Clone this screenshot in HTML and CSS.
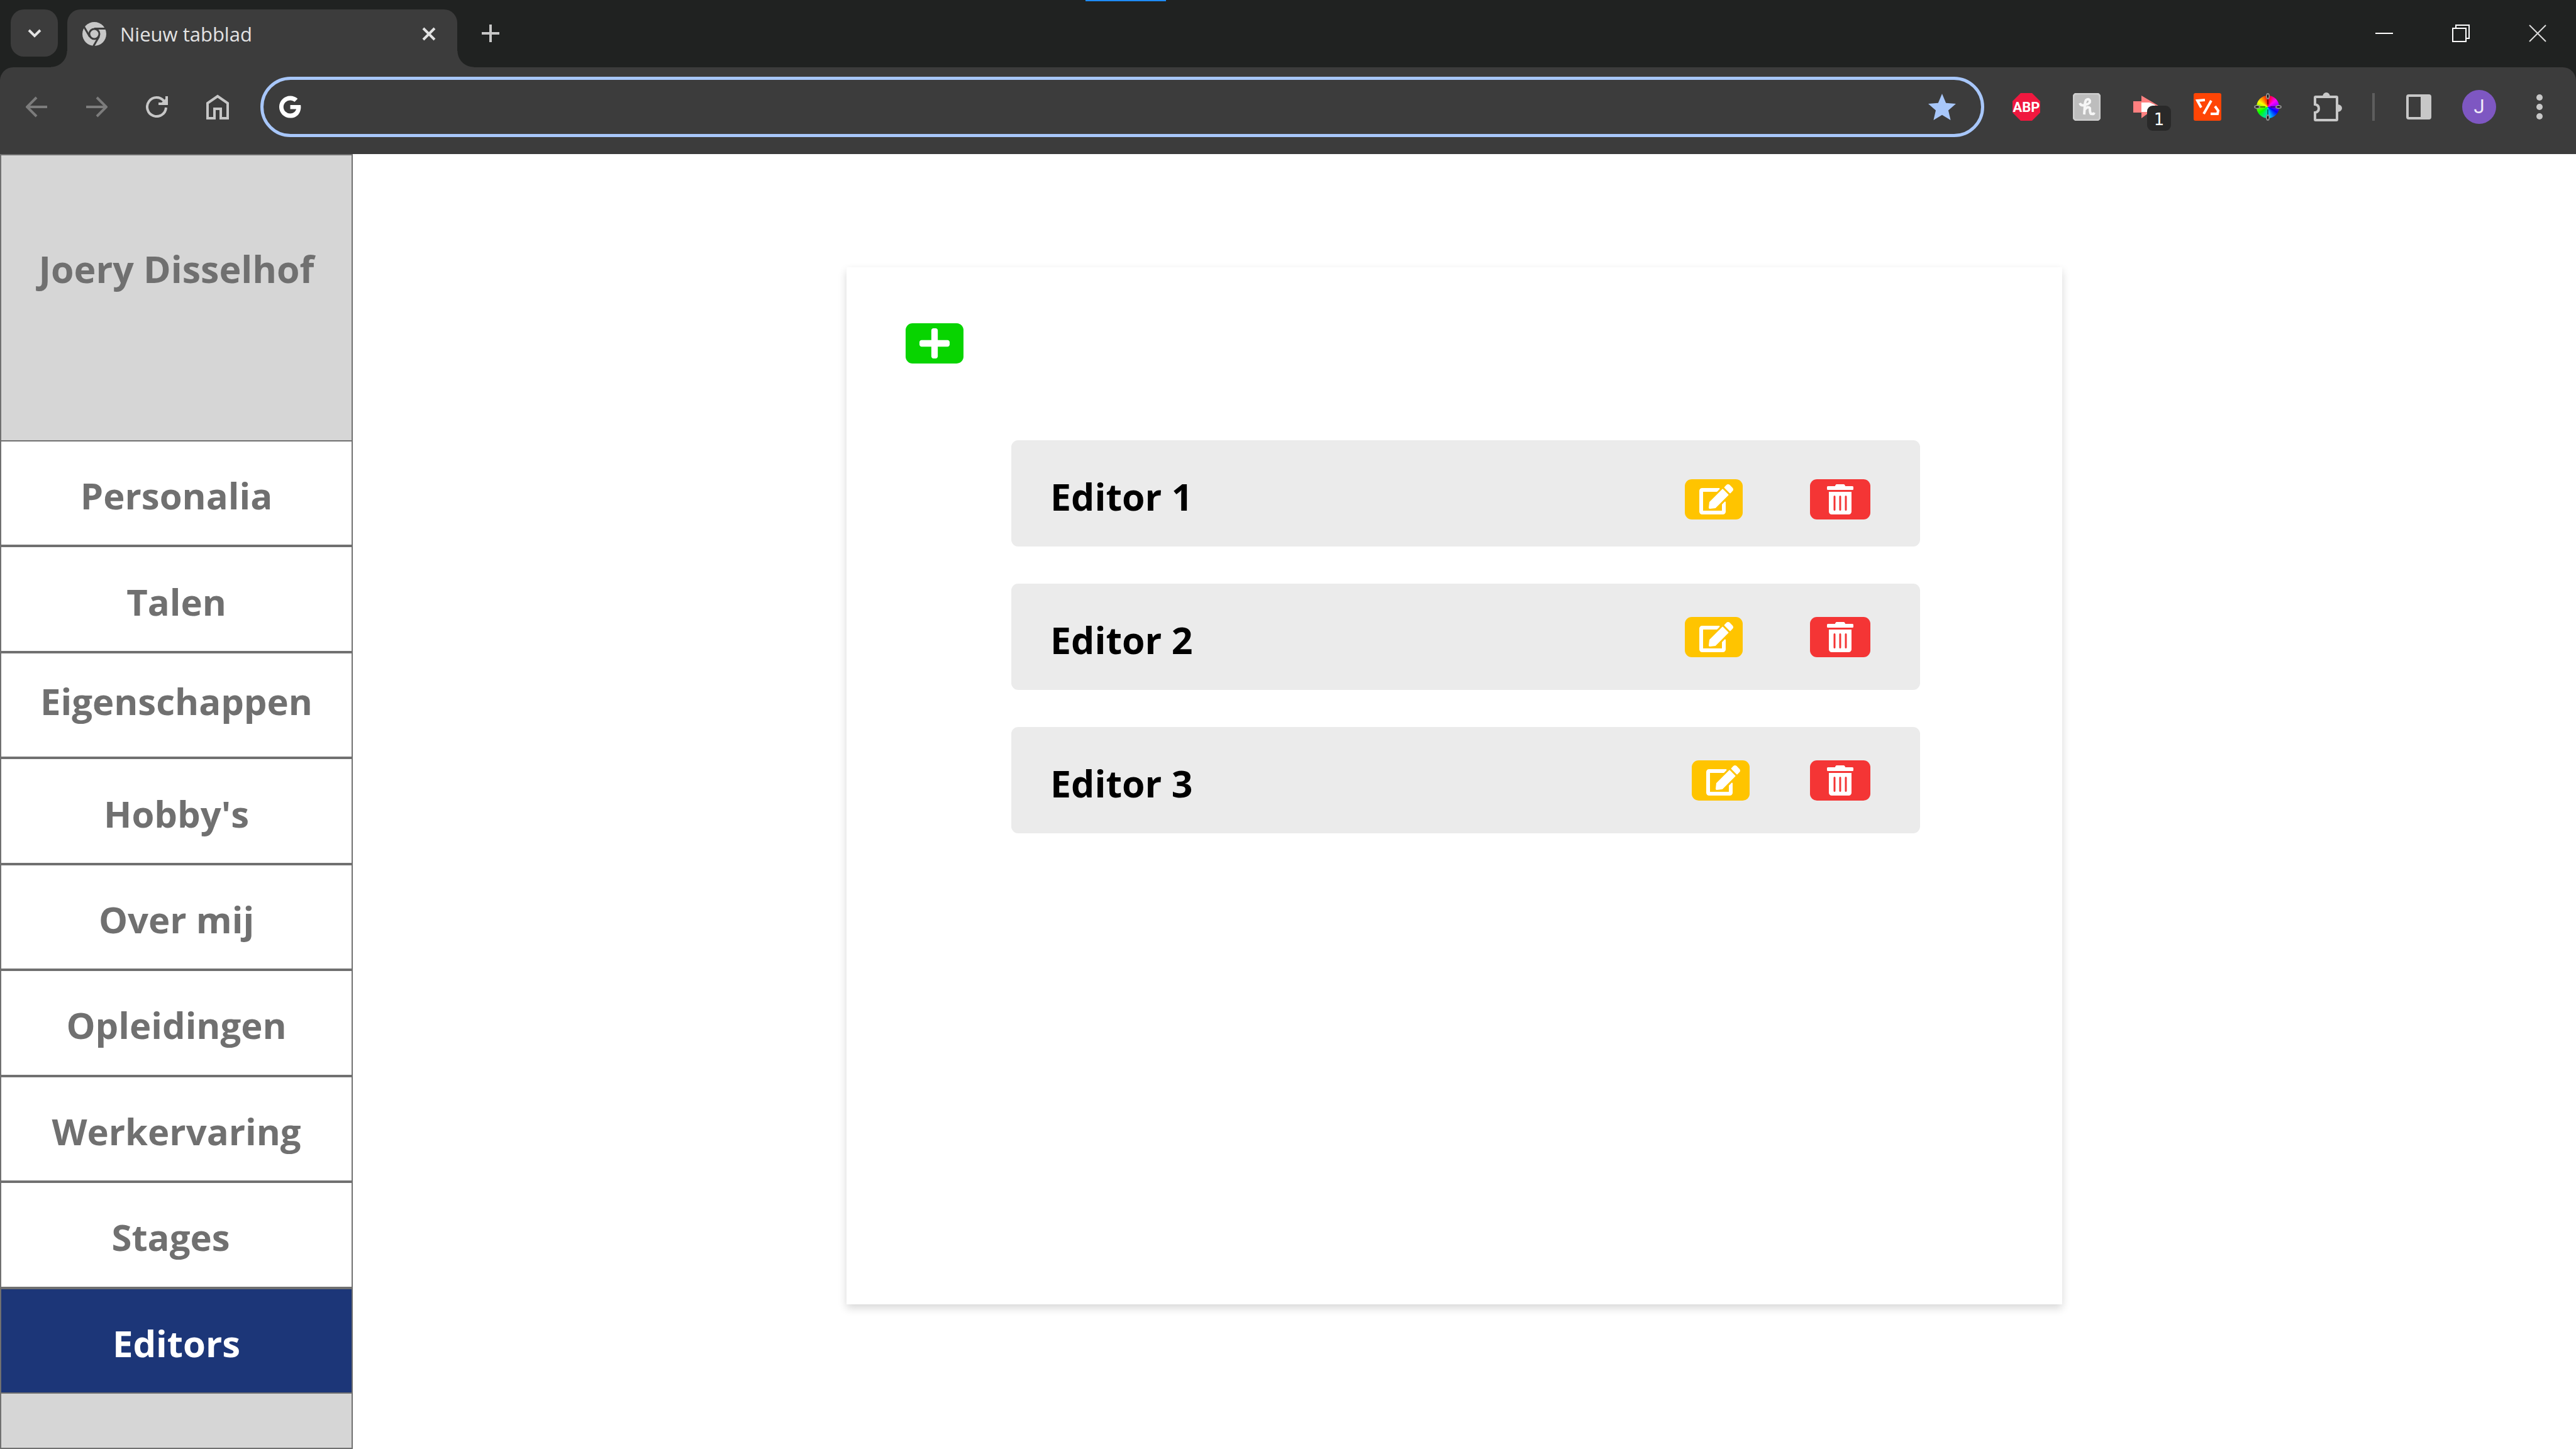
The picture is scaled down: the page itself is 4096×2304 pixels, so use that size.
FILE: index.html
```html
<!DOCTYPE html>
<html lang="nl">
<head>
<meta charset="utf-8">
<meta name="viewport" content="width=device-width, initial-scale=1">
<title>Nieuw tabblad</title>
<link rel="stylesheet" href="styles.css">
</head>
<body>
<svg class="sprite" aria-hidden="true">
  <symbol id="i-edit" viewBox="0 0 576 512"><path d="M402.6 83.2l90.2 90.2c3.8 3.8 3.8 10 0 13.8L274.4 405.6l-92.8 10.3c-12.4 1.4-22.9-9.1-21.5-21.5l10.3-92.8L388.8 83.2c3.8-3.8 10-3.8 13.8 0zm162-22.9l-48.8-48.8c-15.2-15.2-39.9-15.2-55.2 0l-35.4 35.4c-3.8 3.8-3.8 10 0 13.8l90.2 90.2c3.8 3.8 10 3.8 13.8 0l35.4-35.4c15.2-15.3 15.2-40 0-55.2zM384 346.2V448H64V128h229.8c3.2 0 6.2-1.3 8.5-3.5l40-40c7.6-7.6 2.2-20.5-8.5-20.5H48C21.5 64 0 85.5 0 112v352c0 26.5 21.5 48 48 48h352c26.5 0 48-21.5 48-48V306.2c0-10.7-12.9-16-20.5-8.5l-40 40c-2.2 2.3-3.5 5.3-3.5 8.5z"/></symbol>
  <symbol id="i-trash" viewBox="0 0 448 512"><path d="M32 464a48 48 0 0 0 48 48h288a48 48 0 0 0 48-48V128H32zm272-256a16 16 0 0 1 32 0v224a16 16 0 0 1-32 0zm-96 0a16 16 0 0 1 32 0v224a16 16 0 0 1-32 0zm-96 0a16 16 0 0 1 32 0v224a16 16 0 0 1-32 0zM432 32H312l-9.4-18.7A24 24 0 0 0 281.1 0H166.8a23.72 23.72 0 0 0-21.4 13.3L136 32H16A16 16 0 0 0 0 48v32a16 16 0 0 0 16 16h416a16 16 0 0 0 16-16V48a16 16 0 0 0-16-16z"/></symbol>
</svg>

<header class="browser">
  <span class="accent"></span>
  <div class="tabstrip">
    <button class="tab-search" type="button" aria-label="Tabbladen zoeken">
      <svg width="22" height="16" viewBox="0 0 22 16" class="line"><path d="M2 3l9 9 9-9"/></svg>
    </button>
    <div class="tab">
      <svg width="38" height="38" viewBox="0 0 38 38">
        <circle cx="19" cy="19" r="19" fill="#c7c7c7"/>
        <g fill="none" stroke="#3c3c3c" stroke-width="3">
          <circle cx="19" cy="19" r="8"/>
          <path d="M19 10.500H38"/>
          <path d="M19 10.500H38" transform="rotate(120 19 19)"/>
          <path d="M19 10.500H38" transform="rotate(240 19 19)"/>
        </g>
      </svg>
      <span class="tab-title">Nieuw tabblad</span>
      <button class="tab-close" type="button" aria-label="Tabblad sluiten">
        <svg width="22" height="22" viewBox="0 0 22 22" class="line"><path d="M2 2l18 18M20 2L2 20"/></svg>
      </button>
    </div>
    <button class="new-tab" type="button" aria-label="Nieuw tabblad openen">
      <svg width="28" height="28" viewBox="0 0 28 28" class="line"><path d="M14 0v28M0 14h28"/></svg>
    </button>
    <div class="window-controls">
      <button type="button" aria-label="Minimaliseren"><svg width="28" height="28" viewBox="0 0 28 28"><path d="M0 13h28v2H0z" fill="#fff"/></svg></button>
      <button type="button" aria-label="Verkleinen"><svg width="28" height="28" viewBox="0 0 28 28" fill="none" stroke="#fff" stroke-width="2"><path d="M1 6h21v21H1zM6 6V1h21v21h-5"/></svg></button>
      <button type="button" aria-label="Sluiten"><svg width="28" height="28" viewBox="0 0 28 28" fill="none" stroke="#dcdcdc" stroke-width="2"><path d="M1 1l26 26M27 1L1 27"/></svg></button>
    </div>
  </div>

  <div class="toolbar">
    <button class="tool dim" type="button" aria-label="Vorige"><svg width="34" height="34" viewBox="0 0 34 34" class="line"><path d="M34 17H3M17 2L2 17l15 15"/></svg></button>
    <button class="tool dim" type="button" aria-label="Volgende"><svg width="34" height="34" viewBox="0 0 34 34" class="line"><path d="M0 17h31M17 2l15 15-15 15"/></svg></button>
    <button class="tool" type="button" aria-label="Vernieuwen"><svg width="36" height="34" viewBox="0 0 36 34" class="line"><path d="M32 18A15 15 0 1 1 29 8M33 0v12H20"/><path d="M26 12l7-7v7z"/></svg></button>
    <button class="tool" type="button" aria-label="Startpagina"><svg width="36" height="40" viewBox="0 0 36 40" class="line"><path d="M2 38V14L18 3l16 11v24H23V23H13v15z"/></svg></button>
    <form class="omnibox">
      <svg width="36" height="36" viewBox="2 2 20.500 20" fill="#fff"><path d="M12.545 10.239v3.821h5.445c-.712 2.315-2.647 3.972-5.445 3.972a6.033 6.033 0 110-12.064c1.498 0 2.866.549 3.921 1.453l2.814-2.814A9.969 9.969 0 0012.545 2C7.021 2 2.543 6.477 2.543 12s4.478 10 10.002 10c8.396 0 10.249-7.850 9.426-11.748z"/></svg>
      <input class="address" type="text" aria-label="Adres- en zoekbalk">
      <button class="bookmark" type="button" aria-label="Bladwijzer"><svg width="44" height="42" viewBox="2 2 20 19" fill="#a8c7fa"><path d="M12 17.270L18.180 21l-1.640-7.030L22 9.240l-7.190-.61L12 2 9.190 8.630 2 9.240l5.460 4.730L5.820 21z"/></svg></button>
    </form>
    <button class="tool" type="button" aria-label="Adblock Plus"><svg width="44" height="44" viewBox="0 0 44 44"><path d="M13 0h18l13 13v18L31 44H13L0 31V13z" fill="#f0183f"/><text x="22" y="30" text-anchor="middle" class="abp">ABP</text></svg></button>
    <button class="tool" type="button" aria-label="Honey"><svg width="44" height="44" viewBox="0 0 44 44"><rect x="1" y="1" width="42" height="42" rx="5" fill="#bdbdbd" stroke="#cdcdcd" stroke-width="3"/><path d="M11 16q2 5 8 3 9-2 8-7-2-4-6-1-2 3-2 9l-1 14M19 26q5-6 8-2 0 10 3 9 3 1 4-2" fill="none" stroke="#f6f6f6" stroke-width="4"/></svg></button>
    <button class="tool" type="button" aria-label="Extensie, 1 melding"><span class="badged"><svg width="44" height="44" viewBox="0 0 44 44"><path d="M0 13h13V4l27 16-27 20V31H0z" fill="#ff8080"/><path d="M13 15h13l9 4-9 11H13z" fill="#fff"/></svg><span class="badge">1</span></span></button>
    <button class="tool" type="button" aria-label="Code-extensie"><svg width="44" height="44" viewBox="0 0 44 44"><rect width="44" height="44" rx="3" fill="#ff4505"/><path d="M18 11L6 12l6 11M28 12L16 33M34 21l5 7-1 5H27" fill="none" stroke="#fff" stroke-width="4"/></svg></button>
    <button class="tool" type="button" aria-label="Kleurkiezer"><span class="wheel"><svg width="44" height="44" viewBox="0 0 44 44"><path d="M22 6v12M22 38V26M6 22h12M38 22H26" stroke="#000" stroke-opacity=".5" stroke-width="2"/><g fill="#000" stroke="#8c8c8c" stroke-width="2"><ellipse cx="22" cy="5" rx="2" ry="4"/><ellipse cx="22" cy="39" rx="2" ry="4"/><ellipse cx="5" cy="22" rx="4" ry="2"/><ellipse cx="39" cy="22" rx="4" ry="2"/></g></svg></span></button>
    <button class="tool" type="button" aria-label="Extensies"><svg width="46" height="48" viewBox="0 0 46 48"><path d="M2 9q0-1 1-1h33q1 0 1 1v35q0 1-1 1H3q-1 0-1-1V33q6-1 6-6.500T2 20z" fill="none" stroke="#c7c7c7" stroke-width="4"/><path d="M14 8a6 7 0 0 1 12 0zM38 20a7 6 0 0 1 0 12z" fill="#c7c7c7"/></svg></button>
    <span class="divider"></span>
    <button class="tool" type="button" aria-label="Zijpaneel"><svg width="40" height="40" viewBox="0 0 40 40"><rect x="2" y="2" width="36" height="36" rx="2" fill="none" stroke="#c7c7c7" stroke-width="4"/><path d="M23 2h15v36H23z" fill="#c7c7c7"/></svg></button>
    <button class="tool" type="button" aria-label="Profiel"><span class="avatar">J</span></button>
    <button class="tool" type="button" aria-label="Menu"><svg width="10" height="40" viewBox="0 0 10 40" fill="#c7c7c7"><circle cx="5" cy="5" r="5"/><circle cx="5" cy="20" r="5"/><circle cx="5" cy="35" r="5"/></svg></button>
  </div>
</header>

<div class="app">
  <aside class="sidebar">
    <h1 class="owner">Joery Disselhof</h1>
    <nav class="menu">
      <a href="#personalia">Personalia</a>
      <a href="#talen">Talen</a>
      <a href="#eigenschappen" class="raised">Eigenschappen</a>
      <a href="#hobbys">Hobby's</a>
      <a href="#over-mij">Over mij</a>
      <a href="#opleidingen">Opleidingen</a>
      <a href="#werkervaring">Werkervaring</a>
      <a href="#stages" class="shifted">Stages</a>
      <a href="#editors" class="active" aria-current="page">Editors</a>
    </nav>
  </aside>

  <main class="content">
    <section class="panel">
      <button class="action add" type="button" aria-label="Editor toevoegen"><svg width="48" height="48" viewBox="0 32 448 448"><path d="M416 208H272V64c0-17.670-14.330-32-32-32h-32c-17.670 0-32 14.330-32 32v144H32c-17.670 0-32 14.330-32 32v32c0 17.670 14.330 32 32 32h144v144c0 17.670 14.330 32 32 32h32c17.670 0 32-14.330 32-32V304h144c17.670 0 32-14.330 32-32v-32c0-17.670-14.330-32-32-32z"/></svg></button>
      <ul class="editors">
        <li class="editor">
          <span class="editor-name">Editor 1</span>
          <span class="actions lowered">
            <button class="action edit" type="button" aria-label="Editor 1 bewerken"><svg width="54" height="48"><use href="#i-edit"/></svg></button>
            <button class="action delete" type="button" aria-label="Editor 1 verwijderen"><svg width="42" height="48"><use href="#i-trash"/></svg></button>
          </span>
        </li>
        <li class="editor">
          <span class="editor-name">Editor 2</span>
          <span class="actions">
            <button class="action edit" type="button" aria-label="Editor 2 bewerken"><svg width="54" height="48"><use href="#i-edit"/></svg></button>
            <button class="action delete" type="button" aria-label="Editor 2 verwijderen"><svg width="42" height="48"><use href="#i-trash"/></svg></button>
          </span>
        </li>
        <li class="editor">
          <span class="editor-name">Editor 3</span>
          <span class="actions tight">
            <button class="action edit" type="button" aria-label="Editor 3 bewerken"><svg width="54" height="48"><use href="#i-edit"/></svg></button>
            <button class="action delete" type="button" aria-label="Editor 3 verwijderen"><svg width="42" height="48"><use href="#i-trash"/></svg></button>
          </span>
        </li>
      </ul>
    </section>
  </main>
</div>
</body>
</html>
```
FILE: styles.css
```css
* {
  box-sizing: border-box;
}

body {
  margin: 0;
  min-height: 100vh;
  display: flex;
  flex-direction: column;
  background: #fff;
  font-family: "Open Sans", "Noto Sans", sans-serif;
}

button {
  display: flex;
  align-items: center;
  justify-content: center;
  padding: 0;
  border: 0;
  background: none;
  font: inherit;
}

.sprite {
  display: none;
}

.line {
  fill: none;
  stroke: currentColor;
  stroke-width: 4;
}

/* Browser chrome */
.browser {
  position: relative;
  background: #202221;
  color: #c7c7c7;
}

.accent {
  position: absolute;
  top: 0;
  left: 1726px;
  width: 128px;
  height: 2px;
  background: #1e8cfa;
}

.tabstrip {
  display: flex;
  height: 107px;
  padding: 15px 0 0 17px;
}

.tab-search {
  width: 75px;
  height: 75px;
  margin-right: 15px;
  border-radius: 21px;
  background: #3c3c3c;
  color: #e3e3e3;
}

.tab {
  position: relative;
  display: flex;
  align-items: center;
  gap: 22px;
  width: 620px;
  padding: 0 34px 15px 24px;
  border-radius: 21px 21px 0 0;
  background: #3c3c3c;
  color: #e3e3e3;
}

.tab::before,
.tab::after {
  content: "";
  position: absolute;
  bottom: 0;
  width: 26px;
  height: 26px;
}

.tab::before {
  right: 100%;
  background: radial-gradient(circle at 0 0, transparent 25px, #3c3c3c 26px);
}

.tab::after {
  left: 100%;
  background: radial-gradient(circle at 100% 0, transparent 25px, #3c3c3c 26px);
}

.tab-title {
  flex: 1;
  font-size: 31px;
  line-height: 40px;
}

.tab-close {
  color: #e3e3e3;
}

.new-tab {
  width: 75px;
  height: 75px;
  margin-left: 15px;
  color: #c7c7c7;
}

.window-controls {
  display: flex;
  margin-left: auto;
}

.window-controls button {
  width: 122px;
  height: 75px;
}

.toolbar {
  display: flex;
  align-items: center;
  padding: 15px 10px 27px;
  border-radius: 21px 21px 0 0;
  background: #3c3c3c;
}

.tool {
  width: 96px;
  height: 96px;
  color: #c7c7c7;
}

.dim {
  color: #7c7c7c;
}

.omnibox {
  flex: 1;
  display: flex;
  align-items: center;
  height: 96px;
  margin: 0 19px 0 20px;
  padding: 0 40px 0 24px;
  border: 5px solid #a8c7fa;
  border-radius: 48px;
}

.address {
  flex: 1;
  min-width: 0;
  height: 60px;
  margin: 0 24px;
  padding: 0;
  border: 0;
  outline: 0;
  background: none;
  color: #e3e3e3;
  font: inherit;
  font-size: 31px;
}

.abp {
  fill: #fff;
  font: 700 22px Roboto, sans-serif;
}

.badged {
  position: relative;
  display: flex;
}

.badge {
  position: absolute;
  top: 20px;
  left: 22px;
  width: 38px;
  height: 40px;
  border-radius: 9px;
  background: #292929;
  color: #fff;
  font: 26px/44px "DejaVu Sans", sans-serif;
  text-align: center;
}

.wheel {
  display: flex;
  align-items: center;
  justify-content: center;
  width: 36px;
  height: 36px;
  border-radius: 50%;
  background: conic-gradient(#f00, #f0f 50deg, #80f 90deg, #00f 120deg, #0cf 170deg, #0f0 235deg, #8f0 270deg, #ff0 300deg, #f00);
}

.wheel svg {
  flex: none;
}

.divider {
  width: 4px;
  height: 44px;
  margin: 0 22px;
  background: #5e5e5e;
}

.avatar {
  width: 54px;
  height: 54px;
  border-radius: 50%;
  background: #7e57c2;
  color: #f0eaf8;
  font: 31px/54px Roboto, sans-serif;
  text-align: center;
}

/* Application */
.app {
  flex: 1;
  display: flex;
}

.sidebar {
  display: flex;
  flex-direction: column;
  width: 561px;
  padding-bottom: 86px;
  border: 2px solid #707070;
  background: #d6d6d6;
  color: #707070;
}

.owner {
  height: 453px;
  margin: 0;
  padding-top: 140px;
  font-size: 59px;
  font-weight: 700;
  line-height: 80px;
  text-align: center;
}

.menu {
  flex: 1;
  display: grid;
  grid-auto-rows: 1fr;
  margin: 0 -2px;
}

.menu a {
  display: flex;
  align-items: center;
  justify-content: center;
  padding-top: 8px;
  border: 2px solid #707070;
  background: #fff;
  color: inherit;
  font-size: 58px;
  font-weight: 700;
  line-height: 80px;
  text-decoration: none;
}

.menu .raised {
  padding: 0 0 12px;
}

.menu .shifted {
  padding-right: 18px;
}

.menu .active {
  background: #1c3678;
  color: #fff;
}

.content {
  flex: 1;
  display: flex;
  padding: 180px 817px 230px 785px;
}

.panel {
  flex: 1;
  padding: 89px 226px 89px 94px;
  background: #fff;
  box-shadow: 0 6px 13px rgba(0, 0, 0, 0.16);
}

.action {
  width: 92px;
  height: 64px;
  border-radius: 11px;
  fill: #fff;
}

.add {
  background: #08d400;
}

.edit {
  padding-left: 8px;
  background: #ffc400;
}

.delete {
  width: 96px;
  background: #f43535;
}

.editors {
  display: grid;
  gap: 59px;
  margin: 122px 0 0 168px;
  padding: 0;
  list-style: none;
}

.editor {
  display: flex;
  align-items: center;
  justify-content: space-between;
  height: 169px;
  padding: 0 79px 0 62px;
  border-radius: 11px;
  background: #ebebeb;
}

.editor-name {
  padding-top: 8px;
  color: #000;
  font-size: 59px;
  font-weight: 700;
  line-height: 80px;
}

.actions {
  display: flex;
  gap: 107px;
}

.lowered {
  padding-top: 18px;
}

.tight {
  gap: 96px;
}
```
